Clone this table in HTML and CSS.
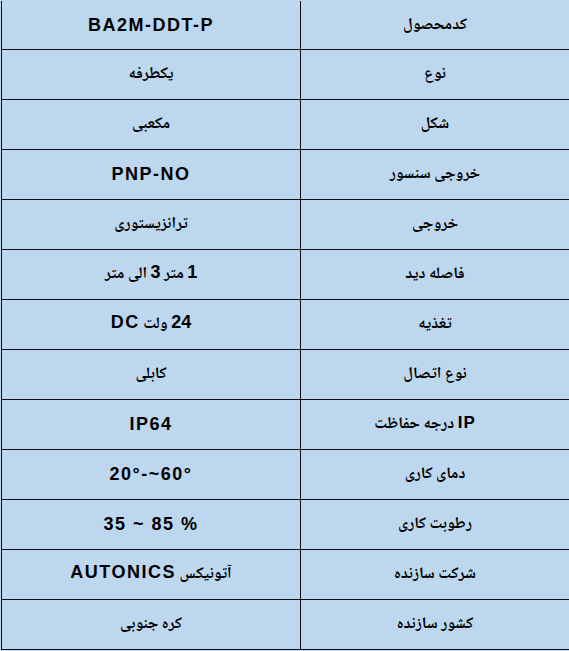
FILE: index.html
```html
<!DOCTYPE html>
<html lang="fa">
<head>
<meta charset="utf-8">
<title>مشخصات BA2M-DDT-P</title>
<link rel="stylesheet" href="styles.css">
</head>
<body>
<div class="sheet" dir="rtl">
  <div class="row"><div class="cell label"><span class="t">کدمحصول</span></div><div class="cell value"><span class="t lat">BA2M-DDT-P</span></div></div>
  <div class="row"><div class="cell label"><span class="t">نوع</span></div><div class="cell value"><span class="t">یکطرفه</span></div></div>
  <div class="row"><div class="cell label"><span class="t">شکل</span></div><div class="cell value"><span class="t">مکعبی</span></div></div>
  <div class="row"><div class="cell label"><span class="t">خروجی سنسور</span></div><div class="cell value"><span class="t lat">PNP-NO</span></div></div>
  <div class="row"><div class="cell label"><span class="t">خروجی</span></div><div class="cell value"><span class="t">ترانزیستوری</span></div></div>
  <div class="row"><div class="cell label"><span class="t">فاصله دید</span></div><div class="cell value"><span class="t"><span class="lat">1</span> متر <span class="lat">3</span> الی متر</span></div></div>
  <div class="row"><div class="cell label"><span class="t">تغذیه</span></div><div class="cell value"><span class="t"><span class="lat">24</span> ولت <span class="lat">DC</span></span></div></div>
  <div class="row"><div class="cell label"><span class="t">نوع اتصال</span></div><div class="cell value"><span class="t">کابلی</span></div></div>
  <div class="row"><div class="cell label"><span class="t shift" dir="ltr">درجه حفاظت <span class="lat-s">IP</span></span></div><div class="cell value"><span class="t lat">IP64</span></div></div>
  <div class="row"><div class="cell label"><span class="t">دمای کاری</span></div><div class="cell value"><span class="t lat" dir="ltr">20°-~60°</span></div></div>
  <div class="row"><div class="cell label"><span class="t">رطوبت کاری</span></div><div class="cell value"><span class="t lat" dir="ltr">35 ~ 85 %</span></div></div>
  <div class="row"><div class="cell label"><span class="t">شرکت سازنده</span></div><div class="cell value"><span class="t">آتونیکس <span class="lat">AUTONICS</span></span></div></div>
  <div class="row"><div class="cell label"><span class="t">کشور سازنده</span></div><div class="cell value"><span class="t">کره جنوبی</span></div></div>
</div>
</body>
</html>
```
FILE: styles.css
```css
html, body {
  margin: 0;
  padding: 0;
  background: #bdd7ee;
}

.sheet {
  margin-left: 1px;
  width: 568px;
  padding-top: 1px;
  background: #bdd7ee;
  font-family: "Noto Naskh Arabic", "Noto Sans Arabic", "DejaVu Sans", sans-serif;
  font-weight: bold;
  color: #000;
}

.row {
  display: flex;
  height: 50px;
  box-sizing: border-box;
  border-bottom: 1px solid #0d0d18;
}

.row:first-child {
  height: 49px;
}

.cell {
  display: flex;
  align-items: center;
  justify-content: center;
  font-size: 16px;
}

.t {
  white-space: nowrap;
}

.shift {
  margin-right: 20px;
}

.label {
  flex: 1;
}

.value {
  width: 300px;
  box-sizing: border-box;
  border-left: 1px solid #0d0d18;
  border-right: 1px solid #0d0d18;
}

.lat {
  font-family: "Liberation Sans", Arial, sans-serif;
  font-size: 18px;
  letter-spacing: 1.5px;
}

.lat-s {
  font-family: "Liberation Sans", Arial, sans-serif;
  font-size: 17px;
  letter-spacing: 1px;
}
```
